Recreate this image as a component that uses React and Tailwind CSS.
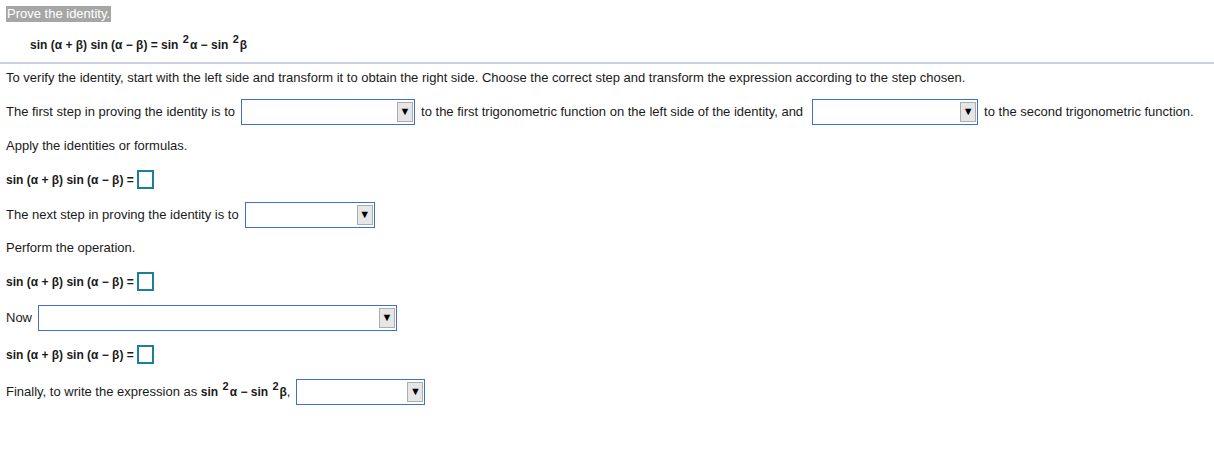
import React from 'react'

const Select = ({ w }) => (
  <span className={`inline-flex items-center justify-end h-[26px] border border-[#3f6fcf] bg-white pr-[1px] ${w}`}>
    <span className="flex items-center justify-center w-[16px] h-[20px] bg-[#e6e6e6] border border-[#adadad] text-[11px] leading-none text-black">▼</span>
  </span>
)

const Box = () => <span className="inline-block w-[17px] h-[19px] border-2 border-[#1c7f9a] bg-white ml-[3px]" />

const Sq = ({ children }) => (
  <>
    sin <sup className="text-[11px] relative -top-[6px] ml-[1px] mr-[1px]">2</sup>
    {children}
  </>
)

const Lhs = () => <span className="font-bold text-[12px]">sin (α + β) sin (α − β) =</span>

export default function App() {
  return (
    <div className="w-[1214px] h-[473px] bg-white text-[13px] text-[#1a1a1a] font-['Liberation_Sans',Arial,sans-serif]">
      <div className="pt-[4px] px-[6px]">
        <span className="inline-block bg-[#a6a6a6] text-white text-[13px] leading-[16px] px-[1px]">Prove the identity.</span>
      </div>
      <div className="pl-[30px] mt-[13px] font-bold text-[12px] leading-[16px]">
        sin (α + β) sin (α − β) = <Sq>α</Sq> − <Sq>β</Sq>
      </div>
      <div className="mt-[9px] border-t-2 border-[#ccd0e2]" />
      <div className="px-[6px]">
        <div className="h-[29px] flex items-center">
          To verify the identity, start with the left side and transform it to obtain the right side. Choose the correct step and transform the expression according to the step chosen.
        </div>
        <div className="h-[38px] flex items-center gap-[6px]">
          <span>The first step in proving the identity is to</span>
          <Select w="w-[174px]" />
          <span className="mr-[3px]">to the first trigonometric function on the left side of the identity, and</span>
          <Select w="w-[166px]" />
          <span>to the second trigonometric function.</span>
        </div>
        <div className="h-[30px] flex items-center">Apply the identities or formulas.</div>
        <div className="h-[38px] flex items-center">
          <Lhs />
          <Box />
        </div>
        <div className="h-[32px] flex items-center gap-[6px]">
          <span>The next step in proving the identity is to</span>
          <Select w="w-[130px]" />
        </div>
        <div className="h-[35px] flex items-center">Perform the operation.</div>
        <div className="h-[32px] flex items-center">
          <Lhs />
          <Box />
        </div>
        <div className="h-[40px] flex items-center gap-[6px]">
          <span>Now</span>
          <Select w="w-[359px]" />
        </div>
        <div className="h-[34px] flex items-center">
          <Lhs />
          <Box />
        </div>
        <div className="h-[40px] flex items-center gap-[6px]">
          <span>
            Finally, to write the expression as{' '}
            <span className="font-bold text-[12px]">
              <Sq>α</Sq> − <Sq>β</Sq>
            </span>
            ,
          </span>
          <Select w="w-[129px]" />
        </div>
      </div>
    </div>
  )
}
